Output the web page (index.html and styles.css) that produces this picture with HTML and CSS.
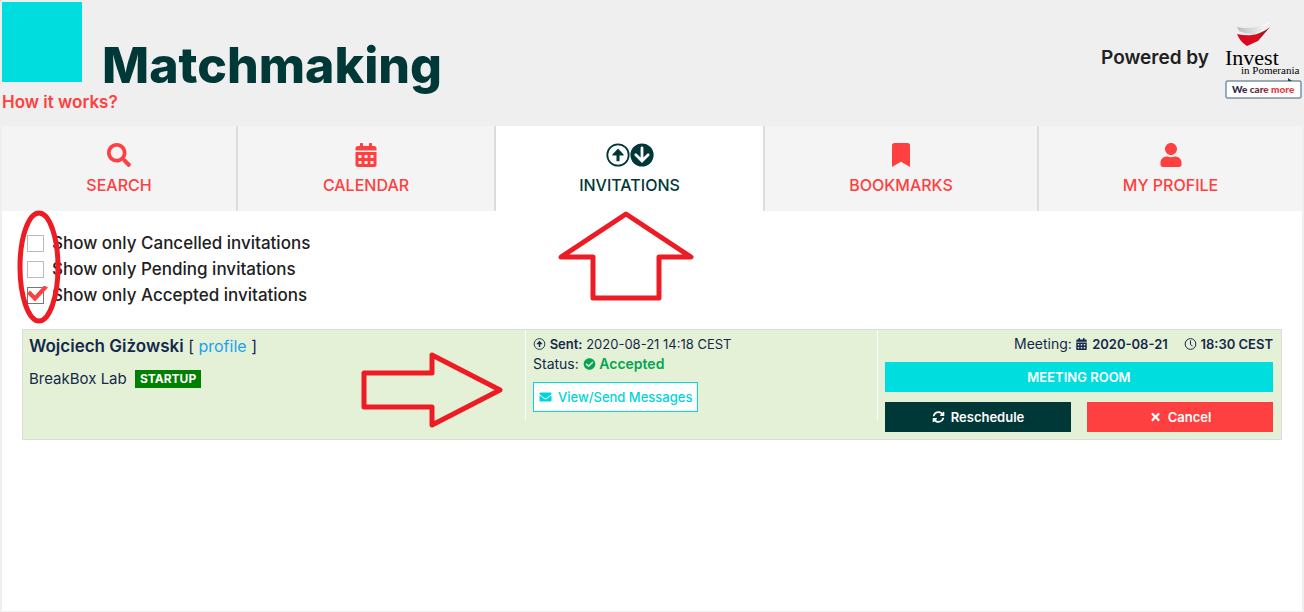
FILE: index.html
```
<!DOCTYPE html>
<html lang="en">
<head>
    <meta charset="UTF-8">
    <meta name="viewport" content="width=device-width, initial-scale=1.0">
    <title>Matchmaking</title>
    <link rel="stylesheet" href="styles.css">
</head>
<body>

<!-- Icons -->
<svg class="sprite" aria-hidden="true">
    <symbol id="i-search" viewBox="0 0 512 512"><path d="M505 442.7L405.3 343c-4.5-4.5-10.6-7-17-7H372c27.6-35.3 44-79.7 44-128C416 93.1 322.9 0 208 0S0 93.1 0 208s93.1 208 208 208c48.3 0 92.7-16.4 128-44v16.3c0 6.4 2.5 12.5 7 17l99.7 99.7c9.4 9.4 24.6 9.4 33.9 0l28.3-28.3c9.4-9.4 9.4-24.6.1-34zM208 336c-70.7 0-128-57.2-128-128 0-70.7 57.2-128 128-128 70.7 0 128 57.2 128 128 0 70.7-57.2 128-128 128z"/></symbol>
    <symbol id="i-calendar" viewBox="0 0 448 512"><path fill-rule="evenodd" d="M0 464c0 26.5 21.5 48 48 48h352c26.5 0 48-21.5 48-48V192H0zM64 256h64v64H64zM192 256h64v64h-64zM320 256h64v64h-64zM64 384h64v64H64zM192 384h64v64h-64zM320 384h64v64h-64zM400 64h-48V16c0-8.800-7.200-16-16-16h-32c-8.800 0-16 7.200-16 16v48H160V16c0-8.800-7.200-16-16-16h-32c-8.800 0-16 7.200-16 16v48H48C21.500 64 0 85.500 0 112v48h448v-48c0-26.500-21.500-48-48-48z"/></symbol>
    <symbol id="i-bookmark" viewBox="0 0 384 512"><path d="M0 512V48C0 21.490 21.490 0 48 0h288c26.510 0 48 21.490 48 48v464L192 400 0 512z"/></symbol>
    <symbol id="i-user" viewBox="0 0 448 512"><path d="M224 256c70.7 0 128-57.3 128-128S294.7 0 224 0 96 57.300 96 128s57.300 128 128 128zm89.600 32h-16.700c-22.200 10.200-46.900 16-72.900 16s-50.600-5.800-72.900-16h-16.700C60.200 288 0 348.200 0 422.400V464c0 26.500 21.500 48 48 48h352c26.500 0 48-21.500 48-48v-41.600c0-74.200-60.200-134.400-134.400-134.400z"/></symbol>
    <symbol id="i-up" viewBox="0 0 24 24"><circle cx="12" cy="12" r="10.700" fill="none" stroke="currentColor" stroke-width="1.800"/><path d="M12 5.600l5.600 5.800v1.100H13.500v5.700h-3v-5.700H6.400v-1.100z"/></symbol>
    <symbol id="i-down" viewBox="0 0 24 24"><circle cx="12" cy="12" r="11.600"/><path d="M12 5v13M5.800 11.700l6.200 6.300 6.200-6.300" fill="none" stroke="#fff" stroke-width="2.800" stroke-linecap="round"/></symbol>
    <symbol id="i-clock" viewBox="0 0 24 24"><circle cx="12" cy="12" r="10.700" fill="none" stroke="currentColor" stroke-width="2"/><path d="M12 5v8l4 3" fill="none" stroke="currentColor" stroke-width="2"/></symbol>
    <symbol id="i-check" viewBox="0 0 512 512"><path d="M504 256c0 136.967-111.033 248-248 248S8 392.967 8 256 119.033 8 256 8s248 111.033 248 248zM227.314 387.314l184-184c6.248-6.248 6.248-16.379 0-22.627l-22.627-22.627c-6.248-6.249-16.379-6.249-22.628 0L216 308.118l-70.059-70.059c-6.248-6.248-16.379-6.248-22.628 0l-22.627 22.627c-6.248 6.248-6.248 16.379 0 22.627l104 104c6.249 6.249 16.379 6.249 22.628.001z"/></symbol>
    <symbol id="i-envelope" viewBox="0 0 512 512"><path d="M502.3 190.8c3.9-3.1 9.7-.2 9.7 4.7V400c0 26.5-21.5 48-48 48H48c-26.5 0-48-21.5-48-48V195.6c0-5 5.7-7.8 9.7-4.7 22.4 17.4 52.1 39.5 154.1 113.6 21.1 15.4 56.7 47.8 92.2 47.6 35.7.3 72-32.8 92.3-47.6 102-74.1 131.6-96.3 154-113.7zM256 320c23.2.4 56.6-29.2 73.4-41.4 132.7-96.3 142.8-104.7 173.4-128.7 5.8-4.5 9.2-11.5 9.2-18.9v-19c0-26.5-21.5-48-48-48H48c-26.5 0-48 21.5-48 48v19c0 7.4 3.4 14.3 9.2 18.9 30.6 23.9 40.7 32.4 173.4 128.7 16.8 12.2 50.2 41.8 73.4 41.4z"/></symbol>
    <symbol id="i-sync" viewBox="0 0 512 512"><path d="M370.72 133.28C339.458 104.008 298.888 87.962 255.848 88c-77.458.068-144.328 53.178-162.791 126.85-1.344 5.363-6.122 9.15-11.651 9.15H24.103c-7.498 0-13.194-6.807-11.807-14.176C33.933 94.924 134.813 8 256 8c66.448 0 126.791 26.136 171.315 68.685L463.03 40.97C478.149 25.851 504 36.559 504 57.941V192c0 13.255-10.745 24-24 24H345.941c-21.382 0-32.09-25.851-16.971-40.971l41.75-41.749zM32 296h134.059c21.382 0 32.09 25.851 16.971 40.971l-41.75 41.75c31.262 29.273 71.835 45.319 114.876 45.28 77.418-.07 144.315-53.144 162.787-126.849 1.344-5.363 6.122-9.15 11.651-9.15h57.304c7.498 0 13.194 6.807 11.807 14.176C478.067 417.076 377.187 504 256 504c-66.448 0-126.791-26.136-171.315-68.685L48.97 471.03C33.851 486.149 8 475.441 8 454.059V320c0-13.255 10.745-24 24-24z"/></symbol>
    <symbol id="i-times" viewBox="0 0 352 512"><path d="M242.72 256l100.07-100.07c12.28-12.28 12.28-32.19 0-44.48l-22.24-22.24c-12.28-12.28-32.19-12.28-44.48 0L176 189.28 75.93 89.21c-12.28-12.28-32.19-12.28-44.48 0L9.21 111.45c-12.28 12.28-12.28 32.19 0 44.48L109.28 256 9.21 356.07c-12.28 12.28-12.28 32.19 0 44.48l22.24 22.24c12.28 12.28 32.2 12.28 44.48 0L176 322.72l100.07 100.07c12.28 12.28 32.2 12.28 44.48 0l22.24-22.24c12.28-12.28 12.28-32.19 0-44.48L242.72 256z"/></symbol>
</svg>

<header class="header">
    <div class="brand">
        <div class="brand-title">
            <div class="brand-box"></div>
            <h1>Matchmaking</h1>
        </div>
        <a class="how" href="#">How it works?</a>
    </div>
    <div class="powered">
        <span>Powered by</span>
        <svg class="partner" viewBox="0 0 78 76" role="img" aria-label="Invest in Pomerania">
            <defs>
                <linearGradient id="sail"><stop offset="0" stop-color="#e2001a"/><stop offset=".6" stop-color="#d4101f"/><stop offset="1" stop-color="#7d1218"/></linearGradient>
                <linearGradient id="foam"><stop offset="0" stop-color="#bbb"/><stop offset="1" stop-color="#fff"/></linearGradient>
                <linearGradient id="care"><stop offset="0" stop-color="#1c2b4a"/><stop offset=".5" stop-color="#7d2740"/><stop offset=".65" stop-color="#e8383d"/></linearGradient>
            </defs>
            <path d="M13 3c10 2 25 1 33-6c-4 7-10 12-17 13c-5 0-10-1-14-3z" fill="url(#foam)"/>
            <path d="M13 10c12 3 23 1 33-7L34 17l-11 5c-5-3-8-7-10-12z" fill="url(#sail)"/>
            <text class="logo-big" x="1" y="41">Invest</text>
            <text class="logo-small" x="17" y="50">in Pomerania</text>
            <rect x="2" y="57" width="75" height="17" rx="1" fill="#fff" stroke="#3d607d"/>
            <path d="M64 54l4 3h-4z" fill="#1c3b57"/>
            <text class="logo-care" x="8" y="69" fill="url(#care)">We care more</text>
        </svg>
    </div>
</header>

<nav class="tabs">
    <a class="tab" href="#"><svg class="icon-lg"><use href="#i-search"/></svg>SEARCH</a>
    <a class="tab" href="#"><svg class="icon-lg"><use href="#i-calendar"/></svg>CALENDAR</a>
    <a class="tab active" href="#">
        <span class="tab-icons"><svg class="icon-lg"><use href="#i-up"/></svg><svg class="icon-lg"><use href="#i-down"/></svg></span>INVITATIONS
        <svg class="mark mark-up" viewBox="0 0 138 90"><path d="M69 3l65 43h-32v41H36V46H4z"/></svg>
    </a>
    <a class="tab" href="#"><svg class="icon-lg"><use href="#i-bookmark"/></svg>BOOKMARKS</a>
    <a class="tab" href="#"><svg class="icon-lg"><use href="#i-user"/></svg>MY PROFILE</a>
</nav>

<main class="content">
    <div class="filters">
        <label><input type="checkbox"> Show only Cancelled invitations</label>
        <label><input type="checkbox"> Show only Pending invitations</label>
        <label><input type="checkbox" checked> Show only Accepted invitations</label>
        <svg class="mark mark-oval" viewBox="0 0 44 114"><ellipse cx="22" cy="57" rx="19" ry="54"/></svg>
    </div>

    <section class="invitation">
        <div class="person">
            <div class="person-name"><strong>Wojciech Giżowski</strong> [ <a href="#">profile</a> ]</div>
            <div class="company">BreakBox Lab <span class="badge">STARTUP</span></div>
        </div>

        <div class="status">
            <div><svg class="icon"><use href="#i-up"/></svg> <b>Sent:</b> 2020-08-21 14:18 CEST</div>
            <div class="status-line">Status: <span class="accepted"><svg class="icon"><use href="#i-check"/></svg> Accepted</span></div>
            <button class="btn btn-outline"><svg class="icon"><use href="#i-envelope"/></svg>View/Send Messages</button>
            <svg class="mark mark-right" viewBox="0 0 144 78"><path d="M4 22h68V4l68 35-68 35V56H4z"/></svg>
        </div>

        <div class="meeting">
            <div class="meeting-date">
                <span><span class="meeting-label">Meeting:</span> <svg class="icon"><use href="#i-calendar"/></svg> <b>2020-08-21</b></span>
                <span><svg class="icon"><use href="#i-clock"/></svg> <b>18:30 CEST</b></span>
            </div>
            <button class="btn btn-room">MEETING ROOM</button>
            <div class="meeting-actions">
                <button class="btn btn-dark"><svg class="icon"><use href="#i-sync"/></svg>Reschedule</button>
                <button class="btn btn-red"><svg class="icon"><use href="#i-times"/></svg>Cancel</button>
            </div>
        </div>
    </section>
</main>

</body>
</html>
```

FILE: styles.css
```
/* Global styling */
* {
    box-sizing: border-box;
}

body {
    display: flex;
    flex-direction: column;
    min-height: 100vh;
    margin: 0;
    padding: 2px 2px 1px;
    background-color: #efefef;
    color: #212121;
    font-family: Inter, sans-serif;
    font-size: 13px;
    line-height: 20px;
}

a {
    color: #ff4040;
    text-decoration: none;
}

.sprite {
    position: absolute;
    width: 0;
    height: 0;
}

.icon,
.icon-lg {
    fill: currentColor;
}

.icon {
    width: 13px;
    height: 12px;
    vertical-align: -1px;
}

.icon-lg {
    width: 24px;
    height: 24px;
}

/* Header */
.header {
    display: flex;
    justify-content: space-between;
    padding-bottom: 14px;
}

.brand-title {
    display: flex;
    align-items: flex-end;
    gap: 20px;
}

.brand-box {
    width: 80px;
    height: 80px;
    background-color: #00dddf;
}

h1 {
    margin: 0;
    color: #003837;
    font-size: 50px;
    line-height: 34px;
    font-weight: 800;
}

.how {
    display: block;
    padding-top: 10px;
    font-size: 17px;
    font-weight: 600;
}

.powered {
    display: flex;
    align-items: flex-start;
    gap: 15px;
    padding-top: 22px;
    font-size: 19px;
    font-weight: 600;
}

.powered span {
    padding-top: 24px;
}

.partner {
    width: 78px;
    height: 76px;
    overflow: visible;
}

.logo-big {
    font: 22px "Liberation Serif", serif;
}

.logo-small {
    font: 11px "Liberation Serif", serif;
}

.logo-care {
    font: 900 10px Lato, sans-serif;
}

/* Tabs */
.tabs {
    display: grid;
    grid-template-columns: 236fr 258fr 269fr 274fr 263fr;
}

.tab {
    position: relative;
    display: flex;
    flex-direction: column;
    align-items: center;
    gap: 8px;
    height: 85px;
    padding-top: 17px;
    border-right: 2px solid #ddd;
    background-color: #f4f4f4;
    font-size: 16px;
    font-weight: 500;
}

.tab:last-child {
    border-right: none;
}

.tab.active {
    background-color: #fff;
    color: #003837;
}

.tab-icons {
    display: flex;
}

/* Content */
.content {
    flex: 1;
    padding: 19px 20px;
    background-color: #fff;
}

.filters {
    position: relative;
    display: flex;
    flex-direction: column;
    align-items: flex-start;
    padding-left: 5px;
    margin-bottom: 21px;
    font-size: 17px;
    font-weight: 500;
    line-height: 26px;
}

.filters label {
    display: flex;
    align-items: center;
    gap: 8px;
}

.filters input {
    position: relative;
    appearance: none;
    width: 17px;
    height: 17px;
    margin: 0;
    border: 1px solid #bbb;
    background-color: #fff;
}

.filters input:checked {
    border-color: #777;
}

.filters input:checked::before {
    content: "";
    position: absolute;
    top: -2px;
    left: -1px;
    width: 21px;
    height: 16px;
    background-color: #ff4040;
    clip-path: polygon(0 8px, 3px 5px, 8px 10px, 17px 0, 21px 2px, 8px 16px);
}

/* Invitation row */
.invitation {
    display: grid;
    grid-template-columns: 502fr 352fr 404fr;
    border: 1px solid #d9dcdc;
    background-color: #e5f1d6;
    color: #14294b;
}

.person {
    padding: 6px;
}

.person-name {
    font-size: 16px;
}

.person-name strong {
    font-size: 17px;
    font-weight: 600;
}

.person-name a {
    color: #1ca0f2;
}

.company {
    margin-top: 13px;
    font-size: 15px;
}

.badge {
    display: inline-block;
    margin-left: 4px;
    padding: 0 5px;
    background-color: #008000;
    color: #fff;
    font-size: 12px;
    line-height: 18px;
    font-weight: 700;
    vertical-align: 1px;
}

.status {
    position: relative;
    height: 90px;
    padding: 4px 7px 0;
    border-left: 1px solid #fff;
}

.status-line,
.meeting-label {
    font-size: 14px;
}

.accepted {
    color: #00a651;
    font-weight: 600;
}

.btn {
    display: flex;
    align-items: center;
    justify-content: center;
    gap: 6px;
    height: 30px;
    padding: 0 5px;
    border: none;
    color: #fff;
    font-family: inherit;
    font-size: 13px;
    font-weight: 600;
    cursor: pointer;
}

.btn-outline {
    margin-top: 8px;
    border: 1px solid #00dddf;
    background-color: #fff;
    color: #00d5dc;
    font-weight: 500;
}

.meeting {
    position: relative;
    padding: 4px 8px 7px 7px;
    border-left: 1px solid transparent;
}

.meeting::before {
    content: "";
    position: absolute;
    top: 0;
    left: -1px;
    width: 1px;
    height: 90px;
    background-color: #fff;
}

.meeting-date {
    display: flex;
    justify-content: flex-end;
    gap: 16px;
    margin-bottom: 8px;
}

b {
    font-weight: 600;
}

.btn-room {
    width: 100%;
    background-color: #00dddf;
}

.meeting-actions {
    display: grid;
    grid-template-columns: 1fr 1fr;
    gap: 16px;
    margin-top: 10px;
}

.btn-dark {
    background-color: #003837;
}

.btn-red {
    background-color: #ff4040;
}

/* Red markers drawn over the page */
.mark {
    position: absolute;
    z-index: 1;
    fill: none;
    stroke: #ed1c24;
    stroke-width: 5px;
    stroke-linejoin: round;
    pointer-events: none;
}

.mark-up {
    top: 85px;
    left: 61px;
    width: 138px;
    height: 90px;
}

.mark-oval {
    top: -20px;
    left: -5px;
    width: 44px;
    height: 114px;
}

.mark-right {
    top: 21px;
    right: 100%;
    width: 144px;
    height: 78px;
    margin-right: 22px;
}
```
